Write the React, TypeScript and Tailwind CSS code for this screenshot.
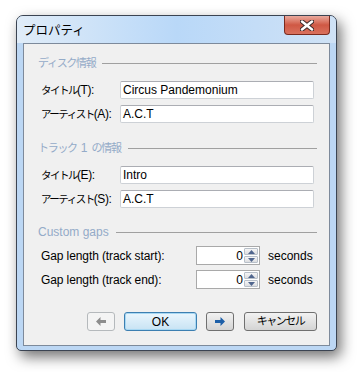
import React from "react";

const ui = "font-['Liberation_Sans','Noto_Sans_CJK_JP',sans-serif]";

function Jp({ children }: { children: React.ReactNode }) {
  return <span className="text-[11px] tracking-[-1.3px]">{children}</span>;
}

function JpLabel({ children }: { children: React.ReactNode }) {
  return <span className="text-[10.5px] tracking-[-1.5px]">{children}</span>;
}

function Heading({ children, className }: { children: React.ReactNode; className?: string }) {
  return (
    <div className={`flex h-[14px] items-center gap-[7px] ${className ?? ""}`}>
      <span className="text-[12px] leading-[14px] text-[#94abc8] whitespace-nowrap">{children}</span>
      <div className="h-px flex-1 bg-[#a0a0a0]" />
    </div>
  );
}

function TextRow({ label, value, className }: { label: React.ReactNode; value: string; className?: string }) {
  return (
    <div className={`flex items-center pl-[3px] pr-[3px] ${className ?? ""}`}>
      <div className="w-[79px] text-[12px] leading-[14px] tracking-[-0.4px] text-black whitespace-nowrap">{label}</div>
      <div className="flex h-[18px] flex-1 items-center rounded-[2px] border border-[#cdd1d6] border-t-[#abadb3] bg-white pl-[2px] text-[12px] text-black">
        {value}
      </div>
    </div>
  );
}

function Spin({ label, className }: { label: string; className?: string }) {
  return (
    <div className={`flex items-center pl-[3px] ${className ?? ""}`}>
      <div className="w-[155px] text-[12px] leading-[14px] tracking-[-0.1px] text-black whitespace-nowrap">{label}</div>
      <div className="flex h-[19px] w-[64px] items-stretch border border-[#a9a9a9] bg-white p-px">
        <div className="flex flex-1 items-center justify-end pr-[1px] text-[12px] text-black">0</div>
        <div className="flex w-[14px] flex-col gap-px">
          <div className="flex flex-1 items-center justify-center rounded-[1px] border border-[#b8c0c9] bg-gradient-to-b from-[#f6f6f6] to-[#dcdde0]">
            <svg width="7" height="4" viewBox="0 0 7 4">
              <path d="M0 4 L3.5 0 L7 4 Z" fill="#50668e" />
            </svg>
          </div>
          <div className="flex flex-1 items-center justify-center rounded-[1px] border border-[#b8c0c9] bg-gradient-to-b from-[#f6f6f6] to-[#dcdde0]">
            <svg width="7" height="4" viewBox="0 0 7 4">
              <path d="M0 0 L3.5 4 L7 0 Z" fill="#50668e" />
            </svg>
          </div>
        </div>
      </div>
      <span className="ml-[8px] text-[12px] text-black">seconds</span>
    </div>
  );
}

function Arrow({ dir, color }: { dir: "left" | "right"; color: string }) {
  const d =
    dir === "left"
      ? "M0 4.5 L4.5 0 L4.5 3 L10 3 L10 6 L4.5 6 L4.5 9 Z"
      : "M10 4.5 L5.5 0 L5.5 3 L0 3 L0 6 L5.5 6 L5.5 9 Z";
  return (
    <svg width="10" height="9" viewBox="0 0 10 9">
      <path d={d} fill={color} />
    </svg>
  );
}

export default function App() {
  return (
    <div className={`h-[372px] w-[357px] bg-white pl-[16px] pt-[15px] ${ui}`}>
      <div className="flex h-[336px] w-[321px] flex-col rounded-t-[7px] rounded-b-[5px] border border-[#3b4452] bg-[#bcd7f4] shadow-[4px_6px_14px_rgba(0,0,0,0.55)]">
        <div className="flex h-[27px] items-start justify-between rounded-t-[6px] bg-gradient-to-r from-[#e0ecf8] via-[#b9d8f8] to-[#cfe2f6] pl-[6px] pr-[6px]">
          <span className="mt-[7px] text-[12.5px] leading-[16px] text-black">プロパティ</span>
          <div className="flex h-[19px] w-[46px] items-center justify-center rounded-b-[4px] border border-t-0 border-[#7a2a1e] bg-gradient-to-b from-[#e9a99d] via-[#cf5844] to-[#d9715e]">
            <svg width="14" height="11" viewBox="0 0 14 11">
              <path d="M2 1.5 L12 9.5 M12 1.5 L2 9.5" stroke="#3d2a2a" strokeWidth="4.5" strokeLinecap="round" />
              <path d="M2 1.5 L12 9.5 M12 1.5 L2 9.5" stroke="#ffffff" strokeWidth="2.5" strokeLinecap="round" />
            </svg>
          </div>
        </div>
        <div className="px-[6px]">
          <div className="flex h-[303px] flex-col border border-[#7d8a9b] bg-[#f0f0f0] pl-[14px] pr-[12px]">
            <Heading className="mt-[12px]">
              <Jp>ディスク情報</Jp>
            </Heading>
            <TextRow className="mt-[11px]" label={<><JpLabel>タイトル</JpLabel>(T):</>} value="Circus Pandemonium" />
            <TextRow className="mt-[6px]" label={<><JpLabel>アーティスト</JpLabel>(A):</>} value="A.C.T" />
            <Heading className="mt-[18px]">
              <Jp>トラック</Jp>
              <span className="px-[4px]">1</span>
              <Jp>の情報</Jp>
            </Heading>
            <TextRow className="mt-[11px]" label={<><JpLabel>タイトル</JpLabel>(E):</>} value="Intro" />
            <TextRow className="mt-[6px]" label={<><JpLabel>アーティスト</JpLabel>(S):</>} value="A.C.T" />
            <Heading className="mt-[17px]">Custom gaps</Heading>
            <Spin className="mt-[7px]" label="Gap length (track start):" />
            <Spin className="mt-[5px]" label="Gap length (track end):" />
            <div className="mt-[23px] flex justify-end gap-[9px]">
              <div className="flex h-[19px] w-[28px] items-center justify-center rounded-[3px] border border-[#b5b9bc] bg-[#f4f4f4]">
                <Arrow dir="left" color="#8d8d8d" />
              </div>
              <div className="flex h-[19px] w-[73px] items-center justify-center rounded-[3px] border border-[#3c7fb1] bg-gradient-to-b from-[#eaf6fd] to-[#c8e3f4] text-[12px] text-black shadow-[inset_0_0_0_1px_#a8d8f3]">
                OK
              </div>
              <div className="flex h-[19px] w-[28px] items-center justify-center rounded-[3px] border border-[#707070] bg-gradient-to-b from-[#f2f2f2] to-[#d4d4d4]">
                <Arrow dir="right" color="#1d5fa8" />
              </div>
              <div className="ml-px flex h-[19px] w-[73px] items-center justify-center rounded-[3px] border border-[#707070] bg-gradient-to-b from-[#f2f2f2] to-[#d4d4d4] text-[11px] tracking-[-1.5px] text-black">
                キャンセル
              </div>
            </div>
          </div>
        </div>
      </div>
    </div>
  );
}
